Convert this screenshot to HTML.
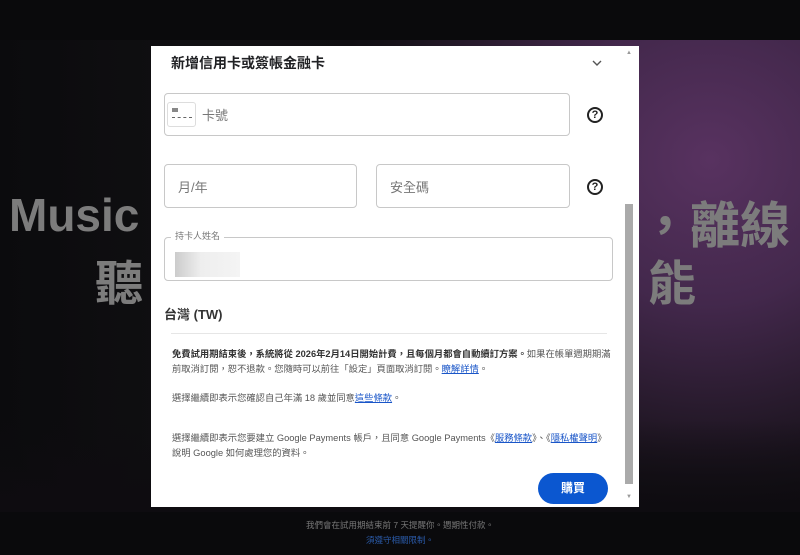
<!DOCTYPE html>
<html><head><meta charset="utf-8"><style>
*{margin:0;padding:0;box-sizing:border-box}
body{width:800px;height:555px;overflow:hidden;position:relative;font-family:"Liberation Sans","Noto Sans CJK TC",sans-serif;background:#0a0a0c}
.bg{position:absolute;left:0;top:40px;width:800px;height:472px;background:radial-gradient(ellipse 380px 360px at 710px 120px,#583260 0%,#43284c 40%,#231827 75%,#100d12 100%),#100d12}
.bg2{position:absolute;left:0;top:40px;width:800px;height:472px;background:linear-gradient(90deg,#0b0b0d 0%,#111013 30%,rgba(20,15,22,0) 55%)}
.bg3{position:absolute;left:0;top:420px;width:800px;height:92px;background:linear-gradient(180deg,rgba(12,10,14,0),#0e0c10)}
.big{position:absolute;color:#7c7c7c;font-weight:bold;font-size:46px;font-family:"Liberation Sans","Noto Sans CJK TC",sans-serif}
.dlg{position:absolute;left:151px;top:46px;width:488px;height:461px;background:#fff}
.t{position:absolute;color:#202124}
.box{position:absolute;border:1px solid #c8c8c8;border-radius:4px}
.ph{position:absolute;color:#777;font-size:13px}
.q{position:absolute;width:16px;height:16px;border:2px solid #222;border-radius:50%;font-size:11px;font-weight:bold;text-align:center;line-height:12px;color:#222}
.small{position:absolute;left:21px;width:440px;font-size:9.3px;line-height:15px;color:#555}
a{color:#1a56c8;text-decoration:underline}
</style></head><body>
<div class="bg"></div><div class="bg2"></div><div class="bg3"></div>
<div class="big" style="left:9px;top:188px">Music</div>
<div class="big" style="left:95px;top:244px;font-size:48px">聽</div>
<div class="big" style="left:640px;top:186px;font-size:50px">，離線</div>
<div class="big" style="left:648px;top:244px;font-size:48px">能</div>
<div class="dlg">
 <div class="t" style="left:20px;top:7px;font-size:14px;font-weight:bold">新增信用卡或簽帳金融卡</div>
 <svg style="position:absolute;left:441px;top:13px" width="10" height="8"><path d="M1 2l4 4 4-4" stroke="#555" stroke-width="1.4" fill="none"/></svg>
 <div class="box" style="left:13px;top:47px;width:406px;height:43px"></div>
 <div style="position:absolute;left:16px;top:56px;width:29px;height:25px;border:1px solid #ddd;border-radius:3px"><div style="position:absolute;left:4px;top:5px;width:6px;height:4px;background:#888"></div><div style="position:absolute;left:4px;top:14px;width:20px;border-top:1px dashed #666"></div></div>
 <div class="ph" style="left:51px;top:59px">卡號</div>
 <div class="q" style="left:436px;top:61px">?</div>
 <div class="box" style="left:13px;top:118px;width:193px;height:44px"></div>
 <div class="ph" style="left:27px;top:131px">月/年</div>
 <div class="box" style="left:225px;top:118px;width:194px;height:44px"></div>
 <div class="ph" style="left:239px;top:131px">安全碼</div>
 <div class="q" style="left:436px;top:133px">?</div>
 <div class="box" style="left:13px;top:191px;width:449px;height:44px"></div>
 <div style="position:absolute;left:20px;top:183px;background:#fff;padding:0 4px;font-size:9px;color:#777">持卡人姓名</div>
 <div style="position:absolute;left:24px;top:206px;width:65px;height:25px;background:linear-gradient(90deg,#ccc,#eee 40%,#f4f4f4)"></div>
 <div class="t" style="left:13px;top:258px;font-size:13px;font-weight:bold;color:#333">台灣 (TW)</div>
 <div style="position:absolute;left:20px;top:287px;width:436px;border-top:1px solid #e6e6e6"></div>
 <div class="small" style="top:301px"><b style="color:#333">免費試用期結束後，系統將從 2026年2月14日開始計費，且每個月都會自動續訂方案。</b>如果在帳單週期期滿前取消訂閱，恕不退款。您隨時可以前往「設定」頁面取消訂閱。<a>瞭解詳情</a>。</div>
 <div class="small" style="top:345px">選擇繼續即表示您確認自己年滿 18 歲並同意<a>這些條款</a>。</div>
 <div class="small" style="top:385px">選擇繼續即表示您要建立 Google Payments 帳戶，且同意 Google Payments《<a>服務條款</a>》、《<a>隱私權聲明</a>》說明 Google 如何處理您的資料。</div>
 <div style="position:absolute;left:387px;top:427px;width:70px;height:31px;border-radius:16px;background:#0b57d0;color:#fff;font-size:12px;font-weight:bold;text-align:center;line-height:31px">購買</div>
 <div style="position:absolute;left:474px;top:158px;width:8px;height:280px;background:#aaa"></div>
 <div style="position:absolute;left:475px;top:4px;font-size:6px;color:#999">▲</div>
 <div style="position:absolute;left:475px;top:448px;font-size:6px;color:#999">▼</div>
</div>
<div style="position:absolute;left:0;top:519px;width:800px;text-align:center;font-size:8.5px;color:#777">我們會在試用期結束前 7 天提醒你。週期性付款。</div>
<div style="position:absolute;left:0;top:534px;width:800px;text-align:center;font-size:8.5px;color:#2a5aa8">須遵守相關限制。</div>
</body></html>
